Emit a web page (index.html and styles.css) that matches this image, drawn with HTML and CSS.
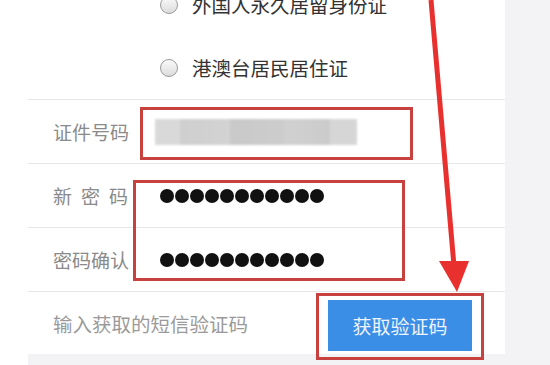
FILE: index.html
```html
<!DOCTYPE html>
<html>
<head>
  <meta charset="UTF-8">
  <title>找回密码</title>
  <link rel="stylesheet" href="styles.css">
</head>
<body>
  <div class="page">
    <div class="gutter"></div>
    <div class="main">
      <div class="form">
        <div class="radio-group">
          <label class="radio-row"><span class="radio"></span>外国人永久居留身份证</label>
          <label class="radio-row"><span class="radio"></span>港澳台居民居住证</label>
        </div>
        <div class="field">
          <span class="label">证件号码</span>
          <div class="blurred"></div>
        </div>
        <div class="field">
          <span class="label spaced">新密码</span>
          <div class="dots">
            <i></i><i></i><i></i><i></i><i></i><i></i><i></i><i></i><i></i><i></i><i></i>
          </div>
        </div>
        <div class="field">
          <span class="label">密码确认</span>
          <div class="dots">
            <i></i><i></i><i></i><i></i><i></i><i></i><i></i><i></i><i></i><i></i><i></i>
          </div>
        </div>
        <div class="field last">
          <span class="placeholder">输入获取的短信验证码</span>
          <button class="sms-button">获取验证码</button>
        </div>
      </div>
    </div>
  </div>

  <!-- annotations drawn over the screenshot -->
  <div class="mark mark-id"></div>
  <div class="mark mark-pwd"></div>
  <div class="mark mark-btn"></div>
  <svg class="arrow" width="550" height="365" viewBox="0 0 550 365">
    <line x1="431" y1="0" x2="454" y2="266" stroke="#e8312f" stroke-width="5"/>
    <polygon points="439,261 469,261 457,292" fill="#e8312f"/>
  </svg>
</body>
</html>
```

FILE: styles.css
```css
body {
  margin: 0;
  width: 550px;
  height: 365px;
  overflow: hidden;
  position: relative;
  background-color: white;
  font-family: "Noto Sans CJK SC", "Noto Sans", sans-serif;
}
.page {
  display: flex;
  height: 365px;
}
.gutter {
  width: 28px;
  background-color: white;
}
.main {
  flex: 1;
  background-color: #f3f3f5;
}
.form {
  width: 477px;
  height: 354px;
  background-color: white;
  overflow: hidden;
}
.radio-group {
  margin-top: -27px;
  border-bottom: 1px solid #e6e6e6;
}
.radio-row {
  display: flex;
  align-items: center;
  height: 63px;
  padding-left: 132px;
  font-size: 19.5px;
  color: #333;
}
.radio {
  width: 16px;
  height: 16px;
  border: 1px solid #9a9a9a;
  border-radius: 50%;
  background: linear-gradient(#fafafa, #dcdcdc);
  margin-right: 14px;
}
.field {
  display: flex;
  align-items: center;
  height: 63px;
  border-bottom: 1px solid #e6e6e6;
}
.label {
  width: 102px;
  padding-left: 25px;
  font-size: 19px;
  color: #8a8a8a;
  flex-shrink: 0;
}
.label.spaced {
  letter-spacing: 9px;
}
.blurred {
  width: 202px;
  height: 26px;
  margin-left: 0;
  background: linear-gradient(90deg,
    #d9d9d9 0, #d9d9d9 25px,
    #cfcfcf 25px, #d3d3d3 75px,
    #c9c9c9 75px, #cdcdcd 130px,
    #d1d1d1 130px, #cbcbcb 175px,
    #d6d6d6 175px);
  filter: blur(1px);
}
.dots {
  display: flex;
  gap: 1px;
  margin-left: 5px;
}
.dots i {
  width: 14px;
  height: 14px;
  border-radius: 50%;
  background-color: #111;
}
.placeholder {
  padding-left: 25px;
  font-size: 19.5px;
  color: #9a9a9a;
}
.sms-button {
  margin-left: auto;
  margin-right: 33px;
  width: 144px;
  height: 51px;
  margin-top: 4px;
  border: none;
  background-color: #3b8ee6;
  color: #eef4ff;
  font-family: inherit;
  font-size: 19px;
}
.mark {
  position: absolute;
  border: 3px solid #c7423f;
  box-sizing: border-box;
}
.mark-id {
  left: 140px;
  top: 107px;
  width: 273px;
  height: 53px;
}
.mark-pwd {
  left: 133px;
  top: 180px;
  width: 272px;
  height: 101px;
}
.mark-btn {
  left: 316px;
  top: 293px;
  width: 168px;
  height: 67px;
}
.arrow {
  position: absolute;
  left: 0;
  top: 0;
}
```
